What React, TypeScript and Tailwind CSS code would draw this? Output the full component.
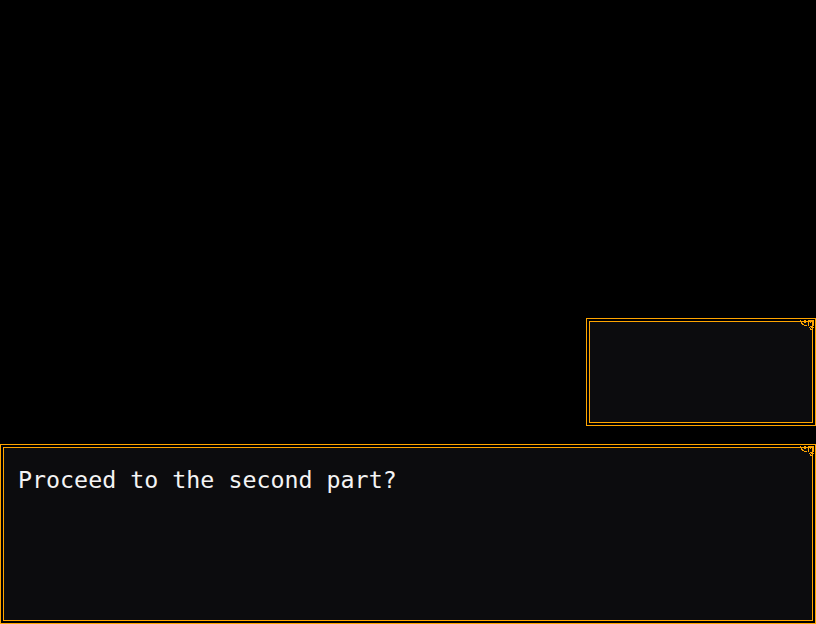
import React from 'react';

const Corner = () => (
  <svg
    width="16"
    height="16"
    viewBox="0 0 16 16"
    shapeRendering="crispEdges"
    className="absolute right-0 top-0"
  >
    <path
      d="M1 1h1v1h1v2h1v1h1v1h3v1h-3v-1h-2v-1h-1v-2h-1z"
      fill="#ffa500"
    />
    <path d="M5 1h2v1h-2z M5 3h2v1h-2z M4 2h1v1h-1z M7 2h1v1h-1z" fill="#ffa500" />
    <path d="M9 1h6v6h-1v-5h-4v5h-1z M11 3h1v1h-1z" fill="#ffa500" />
    <path d="M11 7h3v1h-3z M10 8h1v1h-1z M12 8h1v1h-1z M14 8h1v1h-1z M11 9h1v1h1v1h-2z M13 9h1v1h-1z" fill="#ffa500" />
  </svg>
);

const Window = ({
  className,
  children,
}: {
  className?: string;
  children?: React.ReactNode;
}) => (
  <div className={`relative border border-[#ffa500] p-[2px] ${className ?? ''}`}>
    <div className="h-full w-full border border-[#ffa500] bg-[#0c0c0e]">{children}</div>
    <Corner />
  </div>
);

export default function App() {
  return (
    <div className="flex h-[624px] w-[816px] flex-col overflow-hidden bg-black">
      <Window className="ml-[586px] mt-[318px] h-[108px] w-[230px]" />
      <Window className="mt-[18px] h-[180px] w-[816px]">
        <p
          className="pl-[14px] pt-[17px] text-[23.3px] leading-[30px] text-[#f4f4f4]"
          style={{ fontFamily: '"DejaVu Sans Mono", monospace' }}
        >
          Proceed to the second part?
        </p>
      </Window>
    </div>
  );
}
